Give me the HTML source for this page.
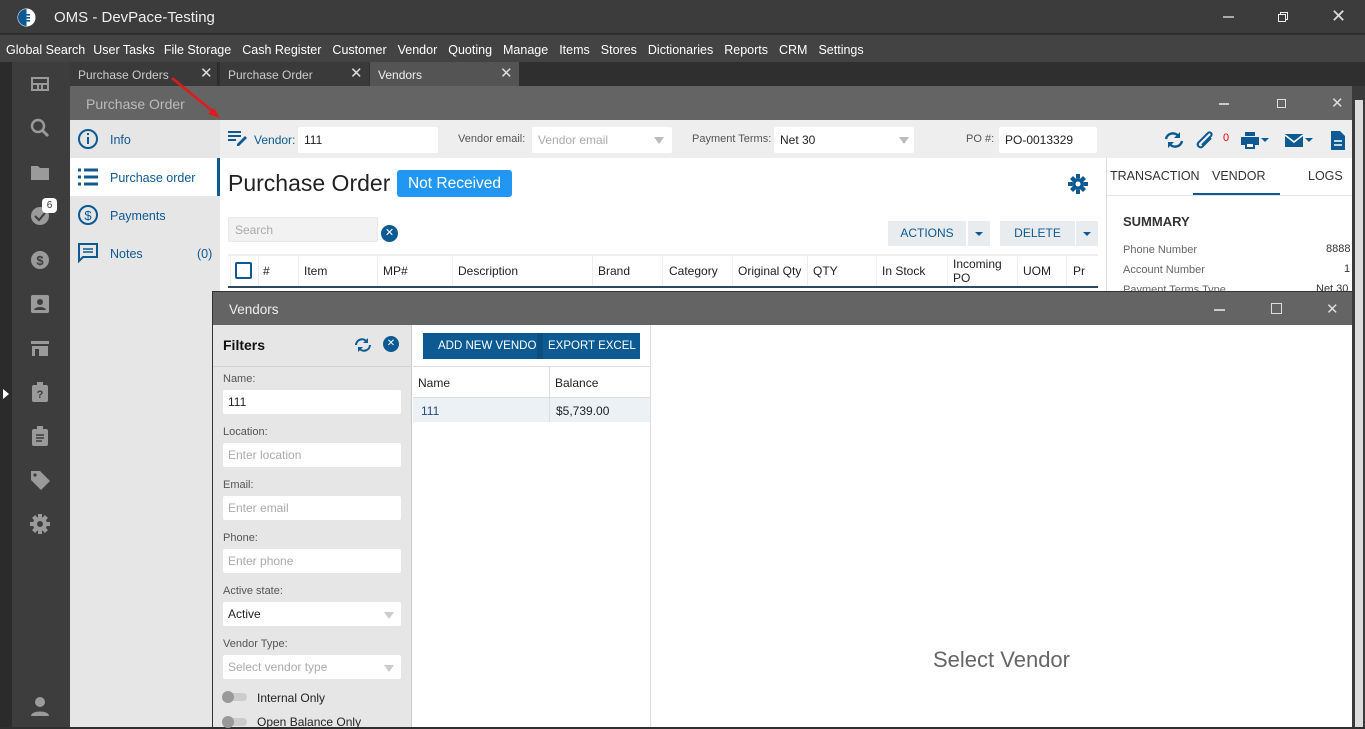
<!DOCTYPE html>
<html><head><meta charset="utf-8"><style>
*{box-sizing:border-box;margin:0;padding:0}
body{width:1365px;height:727px;overflow:hidden;background:#2f2f2f;font-family:"Liberation Sans",sans-serif;font-size:12px;position:relative;color:#222}
.a{position:absolute}
.inp{position:absolute;background:#fff;border-radius:2px;height:26px;padding:6px 6px;font-size:12px;color:#222}
.ph{color:#aaa}
.lbl{position:absolute;font-size:11px;color:#555}
.tri{position:absolute;width:0;height:0;border-left:5px solid transparent;border-right:5px solid transparent;border-top:7px solid #bbb}
.blue{color:#0c5a91}
</style></head><body>
<div class="a" style="left:0;top:0;width:1365px;height:34px;background:#3c3c3c;border-bottom:1px solid #2a2a2a"></div>
<svg class="a" style="left:17px;top:8px" width="19" height="19" viewBox="0 0 19 19"><circle cx="9.5" cy="9.5" r="9" fill="#fff"/><path d="M9.5 1a8.5 8.5 0 0 0 0 17z" fill="#0c5a91"/><rect x="7" y="6" width="6" height="1.6" fill="#0c5a91"/><rect x="7" y="9" width="6" height="1.6" fill="#0c5a91"/><rect x="7" y="12" width="6" height="1.6" fill="#0c5a91"/></svg>
<div class="a" style="left:54px;top:9px;font-size:15px;color:#eee">OMS - DevPace-Testing</div>
<div class="a" style="left:1223px;top:16px;width:11px;height:1.5px;background:#aaa"></div>
<div class="a" style="left:1280px;top:12px;width:8px;height:8px;border:1.5px solid #eee"></div>
<div class="a" style="left:1278px;top:14px;width:8px;height:8px;border:1.5px solid #eee;background:#3c3c3c"></div>
<div class="a" style="left:1331px;top:6px;font-size:18px;color:#ddd">✕</div>
<div class="a" style="left:0;top:35px;width:1365px;height:27px;background:#434343"></div>
<div class="a" style="left:6px;top:43px;font-size:12.5px;color:#fff;white-space:nowrap">
<span style="margin-right:8px">Global Search</span><span style="margin-right:9px">User Tasks</span><span style="margin-right:11px">File Storage</span><span style="margin-right:11px">Cash Register</span><span style="margin-right:11px">Customer</span><span style="margin-right:11px">Vendor</span><span style="margin-right:11px">Quoting</span><span style="margin-right:11px">Manage</span><span style="margin-right:11px">Items</span><span style="margin-right:11px">Stores</span><span style="margin-right:11px">Dictionaries</span><span style="margin-right:11px">Reports</span><span style="margin-right:11px">CRM</span><span>Settings</span></div>
<div class="a" style="left:0;top:62px;width:12px;height:665px;background:#2b2b2b"></div>
<div class="a" style="left:3px;top:389px;width:0;height:0;border-top:5px solid transparent;border-bottom:5px solid transparent;border-left:6px solid #fff"></div>
<div class="a" style="left:12px;top:62px;width:58px;height:665px;background:#3d3d3d"></div>
<svg class="a" style="left:29px;top:73px" width="24" height="480" fill="#9a9a9a">
<path d="M2 4h18v14H2z M4 6v4h14V6z M4 12v4h4v-4z M10 12v4h2v-4z M14 12v4h4v-4z" fill-rule="evenodd"/>
<g transform="translate(0,44)"><circle cx="9" cy="9" r="6" fill="none" stroke="#9a9a9a" stroke-width="2.5"/><path d="M13 13l6 6" stroke="#9a9a9a" stroke-width="3"/></g>
<g transform="translate(0,88)"><path d="M2 5h7l2 2h9v12H2z"/></g>
<g transform="translate(0,132)"><circle cx="11" cy="11" r="9"/><path d="M6 11l4 4 6-7" stroke="#3d3d3d" stroke-width="2" fill="none"/></g>
<g transform="translate(0,176)"><circle cx="11" cy="11" r="9"/><text x="11" y="16" font-size="13" font-weight="bold" fill="#3d3d3d" text-anchor="middle" font-family="Liberation Sans">$</text></g>
<g transform="translate(0,220)"><rect x="2" y="2" width="18" height="18" rx="2"/><circle cx="11" cy="9" r="3" fill="#3d3d3d"/><path d="M5 17c1-4 11-4 12 0z" fill="#3d3d3d"/></g>
<g transform="translate(0,264)"><path d="M2 4h18v3H2z M3 9h16v10H3z M6 12v7h4v-7z"/></g>
<g transform="translate(0,308)"><rect x="3" y="4" width="16" height="17" rx="2"/><rect x="8" y="1" width="6" height="4"/><text x="11" y="17" font-size="11" font-weight="bold" fill="#3d3d3d" text-anchor="middle" font-family="Liberation Sans">?</text></g>
<g transform="translate(0,352)"><rect x="3" y="4" width="16" height="17" rx="2"/><rect x="8" y="1" width="6" height="4"/><path d="M7 10h8M7 13h8M7 16h6" stroke="#3d3d3d" stroke-width="1.5"/></g>
<g transform="translate(0,396)"><path d="M2 2h9l10 10-9 9L2 11z"/><circle cx="6" cy="6" r="1.6" fill="#3d3d3d"/></g>
<g transform="translate(0,440)"><circle cx="11" cy="11" r="7"/><path d="M9 1h4v4h-4zM9 17h4v4h-4zM1 9h4v4H1zM17 9h4v4h-4zM3 5l3-3 3 3-3 3zM13 5l3-3 3 3-3 3zM3 17l3-3 3 3-3 3zM13 17l3-3 3 3-3 3z"/><circle cx="11" cy="11" r="3" fill="#3d3d3d"/></g>
</svg>
<div class="a" style="left:42px;top:198px;width:15px;height:15px;border-radius:4px;background:#fff;font-size:10px;text-align:center;line-height:15px;color:#333">6</div>
<svg class="a" style="left:29px;top:695px" width="22" height="22" fill="#9a9a9a"><circle cx="11" cy="7" r="5"/><path d="M2 21c0-6 18-6 18 0z"/></svg>
<div class="a" style="left:70px;top:62px;width:148px;height:24px;background:#3a3a3a;border-right:1px solid #2a2a2a"></div>
<div class="a" style="left:78px;top:68px;color:#ccc;font-size:12px">Purchase Orders</div><div class="a" style="left:200px;top:64px;color:#ddd;font-size:15px">✕</div>
<div class="a" style="left:220px;top:62px;width:149px;height:24px;background:#3a3a3a"></div>
<div class="a" style="left:228px;top:68px;color:#ccc;font-size:12px">Purchase Order</div><div class="a" style="left:350px;top:64px;color:#ddd;font-size:15px">✕</div>
<div class="a" style="left:370px;top:62px;width:149px;height:24px;background:#545454"></div>
<div class="a" style="left:378px;top:68px;color:#eee;font-size:12px">Vendors</div><div class="a" style="left:500px;top:64px;color:#ddd;font-size:15px">✕</div>
<div class="a" style="left:70px;top:86px;width:1282px;height:34px;background:#646464"></div>
<div class="a" style="left:86px;top:96px;color:#bbb;font-size:14px">Purchase Order</div>
<div class="a" style="left:1219px;top:103px;width:10px;height:1.5px;background:#ccc"></div>
<div class="a" style="left:1277px;top:99px;width:9px;height:9px;border:1.5px solid #ddd"></div>
<div class="a" style="left:1331px;top:94px;font-size:15px;color:#ddd">✕</div>
<svg class="a" style="left:170px;top:76px" width="52" height="44"><path d="M2 2L46 38" stroke="#e01b1b" stroke-width="2.5"/><path d="M50 42l-12-4 6-6z" fill="#e01b1b"/></svg>
<div class="a" style="left:1352px;top:86px;width:13px;height:641px;background:#3a3a3a"></div>
<div class="a" style="left:1355px;top:100px;width:8px;height:627px;background:#ddd"></div>
<div class="a" style="left:70px;top:120px;width:150px;height:607px;background:#e6e6e6"></div>
<div class="a" style="left:70px;top:158px;width:150px;height:38px;background:#fff;border-right:3px solid #0c5a91"></div>
<svg class="a" style="left:77px;top:127px" width="24" height="140" fill="none" stroke="#0c5a91" stroke-width="2">
<circle cx="11" cy="12" r="9"/><path d="M11 10v7M11 6v2"/>
<g transform="translate(0,38)" stroke-width="3"><path d="M1 5h3M7 5h14M1 12h3M7 12h14M1 19h3M7 19h14"/></g>
<g transform="translate(0,76)"><circle cx="11" cy="12" r="9"/><text x="11" y="17" font-size="13" fill="#0c5a91" stroke="none" text-anchor="middle" font-family="Liberation Sans">$</text></g>
<g transform="translate(0,114)"><path d="M2 3h18v13H6l-4 4z"/><path d="M6 8h10M6 11h10" stroke-width="1.5"/></g>
</svg>
<div class="a blue" style="left:110px;top:133px;font-size:12.5px">Info</div>
<div class="a blue" style="left:110px;top:171px;font-size:12.5px">Purchase order</div>
<div class="a blue" style="left:110px;top:209px;font-size:12.5px">Payments</div>
<div class="a blue" style="left:110px;top:247px;font-size:12.5px">Notes</div>
<div class="a blue" style="left:197px;top:247px;font-size:12.5px">(0)</div>
<div class="a" style="left:220px;top:120px;width:1132px;height:38px;background:#eee"></div>
<svg class="a" style="left:228px;top:130px" width="20" height="17" fill="#0c5a91"><rect x="0" y="1" width="13" height="2"/><rect x="0" y="5" width="13" height="2"/><rect x="0" y="9" width="8" height="2"/><path d="M9 14l8-8 2 2-8 8H9z"/></svg>
<div class="a blue" style="left:254px;top:133px;font-size:12px">Vendor:</div>
<div class="inp" style="left:298px;top:127px;width:140px">111</div>
<div class="a" style="left:458px;top:133px;font-size:11px;color:#555">Vendor email:</div>
<div class="inp ph" style="left:532px;top:127px;width:140px">Vendor email</div><div class="tri" style="left:654px;top:137px"></div>
<div class="a" style="left:692px;top:133px;font-size:11px;color:#555">Payment Terms:</div>
<div class="inp" style="left:774px;top:127px;width:140px">Net 30</div><div class="tri" style="left:899px;top:137px"></div>
<div class="a" style="left:966px;top:133px;font-size:11px;color:#555">PO #:</div>
<div class="inp" style="left:999px;top:127px;width:98px">PO-0013329</div>
<div class="a" style="left:220px;top:158px;width:886px;height:134px;background:#fff"></div>
<div class="a" style="left:228px;top:170px;font-size:23px;color:#222">Purchase Order</div>
<div class="a" style="left:397px;top:170px;width:115px;height:27px;background:#2196f3;border-radius:3px;color:#fff;font-size:15.5px;text-align:center;line-height:27px">Not Received</div>
<svg class="a" style="left:1068px;top:174px" width="20" height="20" fill="#0c5a91"><circle cx="10" cy="10" r="6"/><path d="M8 0h4v4H8zM8 16h4v4H8zM0 8h4v4H0zM16 8h4v4h-4zM2 5l3-3 3 3-3 3zM12 5l3-3 3 3-3 3zM2 15l3-3 3 3-3 3zM12 15l3-3 3 3-3 3z"/><circle cx="10" cy="10" r="2.5" fill="#fff"/></svg>
<div class="a" style="left:228px;top:217px;width:150px;height:25px;background:#f2f2f2;border:1px solid #e8e8e8;border-radius:2px;color:#aaa;padding:5px 6px">Search</div>
<div class="a" style="left:381px;top:225px;width:17px;height:17px;border-radius:50%;background:#0c5a91;color:#fff;font-size:11px;text-align:center;line-height:17px">✕</div>
<div class="a blue" style="left:888px;top:221px;width:78px;height:25px;background:#e8ecef;text-align:center;line-height:25px">ACTIONS</div>
<div class="a" style="left:968px;top:221px;width:22px;height:25px;background:#e8ecef"></div><div class="a" style="left:975px;top:232px;border-left:4px solid transparent;border-right:4px solid transparent;border-top:4px solid #0c5a91"></div>
<div class="a blue" style="left:1000px;top:221px;width:75px;height:25px;background:#e8ecef;text-align:center;line-height:25px">DELETE</div>
<div class="a" style="left:1076px;top:221px;width:22px;height:25px;background:#e8ecef"></div><div class="a" style="left:1083px;top:232px;border-left:4px solid transparent;border-right:4px solid transparent;border-top:4px solid #0c5a91"></div>
<div class="a" style="left:228px;top:254px;width:870px;height:38px;border-top:2px solid #eee"></div>
<div class="a" style="left:228px;top:286px;width:870px;height:2px;background:#2d4a63"></div>
<div class="a" style="left:235px;top:262px;width:17px;height:17px;border:2px solid #0c5a91;border-radius:2px"></div>
<div class="a" style="top:256px;left:228px;height:36px;width:870px;font-size:12px">
<span class="a" style="left:35px;top:8px">#</span><span class="a" style="left:76px;top:8px">Item</span><span class="a" style="left:155px;top:8px">MP#</span><span class="a" style="left:230px;top:8px">Description</span><span class="a" style="left:370px;top:8px">Brand</span><span class="a" style="left:441px;top:8px">Category</span><span class="a" style="left:510px;top:8px">Original Qty</span><span class="a" style="left:585px;top:8px">QTY</span><span class="a" style="left:654px;top:8px">In Stock</span><span class="a" style="left:725px;top:1px;line-height:14px">Incoming<br>PO</span><span class="a" style="left:795px;top:8px">UOM</span><span class="a" style="left:845px;top:8px">Pr</span>
<i class="a" style="left:2px;top:0;width:1px;height:30px;background:#eee"></i><i class="a" style="left:30px;top:0;width:1px;height:30px;background:#eee"></i><i class="a" style="left:70px;top:0;width:1px;height:30px;background:#eee"></i><i class="a" style="left:149px;top:0;width:1px;height:30px;background:#eee"></i><i class="a" style="left:224px;top:0;width:1px;height:30px;background:#eee"></i><i class="a" style="left:364px;top:0;width:1px;height:30px;background:#eee"></i><i class="a" style="left:434px;top:0;width:1px;height:30px;background:#eee"></i><i class="a" style="left:504px;top:0;width:1px;height:30px;background:#eee"></i><i class="a" style="left:579px;top:0;width:1px;height:30px;background:#eee"></i><i class="a" style="left:648px;top:0;width:1px;height:30px;background:#eee"></i><i class="a" style="left:719px;top:0;width:1px;height:30px;background:#eee"></i><i class="a" style="left:789px;top:0;width:1px;height:30px;background:#eee"></i><i class="a" style="left:838px;top:0;width:1px;height:30px;background:#eee"></i>
</div>
<svg class="a" style="left:1163px;top:130px" width="185" height="20">
<g fill="none" stroke="#0c5a91" stroke-width="2.5"><path d="M3 9a7 7 0 0 1 13-2M19 11a7 7 0 0 1-13 2"/></g><path d="M17 2v6h-6zM5 18v-6h6z" fill="#0c5a91"/>
<path d="M48 8l-9 9a3 3 0 0 1-4-4l10-10a2 2 0 0 1 3 3l-9 9" fill="none" stroke="#0c5a91" stroke-width="2"/>
<text x="60" y="11" font-size="11" fill="#e00" font-family="Liberation Sans">0</text>
<path d="M82 2h10v4H82zM78 7h18v8H78zM82 12h10v7H82z" fill="#0c5a91"/><path d="M84 14h6v3h-6z" fill="#fff"/><path d="M98 8h8l-4 4z" fill="#0c5a91"/>
<rect x="122" y="4" width="18" height="13" fill="#0c5a91"/><path d="M122 5l9 7 9-7" fill="none" stroke="#fff" stroke-width="1.5"/><path d="M142 8h8l-4 4z" fill="#0c5a91"/>
<path d="M168 1h9l5 5v14h-14z" fill="#0c5a91"/><path d="M171 11h8M171 15h8" stroke="#fff" stroke-width="1.6"/>
</svg>
<div class="a" style="left:1106px;top:158px;width:246px;height:134px;background:#fff;border-left:1px solid #ddd"></div>
<div class="a" style="left:1110px;top:169px;font-size:12.5px;color:#333">TRANSACTION</div>
<div class="a" style="left:1212px;top:169px;font-size:12.5px;color:#333">VENDOR</div>
<div class="a" style="left:1308px;top:169px;font-size:12.5px;color:#333">LOGS</div>
<div class="a" style="left:1193px;top:193px;width:87px;height:2px;background:#0c5a91"></div>
<div class="a" style="left:1107px;top:195px;width:245px;height:1px;background:#e5e5e5"></div>
<div class="a" style="left:1123px;top:214px;font-size:13px;font-weight:bold;color:#333">SUMMARY</div>
<div class="a" style="left:1123px;top:244px;font-size:11px;color:#666">Phone Number</div><div class="a" style="left:1326px;top:243px;font-size:11px;color:#333">8888</div>
<div class="a" style="left:1123px;top:264px;font-size:11px;color:#666">Account Number</div><div class="a" style="left:1344px;top:263px;font-size:11px;color:#333">1</div>
<div class="a" style="left:1123px;top:284px;font-size:11px;color:#666">Payment Terms Type</div><div class="a" style="left:1316px;top:283px;font-size:11px;color:#333">Net 30</div>
<div class="a" style="left:212px;top:291px;width:1140px;height:436px;background:#fff;border-left:1px solid #333;border-top:1px solid #333"></div>
<div class="a" style="left:213px;top:292px;width:1139px;height:33px;background:#646464"></div>
<div class="a" style="left:229px;top:302px;color:#eee;font-size:13.5px">Vendors</div>
<div class="a" style="left:1214px;top:309px;width:11px;height:1.5px;background:#ccc"></div>
<div class="a" style="left:1271px;top:303px;width:11px;height:11px;border:1.5px solid #ddd"></div>
<div class="a" style="left:1326px;top:300px;font-size:15px;color:#ddd">✕</div>
<div class="a" style="left:213px;top:325px;width:199px;height:402px;background:#e6e6e6;border-right:1px solid #ccc"></div>
<div class="a" style="left:223px;top:337px;font-size:14px;font-weight:bold;color:#111">Filters</div>
<svg class="a" style="left:354px;top:337px" width="18" height="16"><g fill="none" stroke="#0c5a91" stroke-width="2"><path d="M2 8a6 6 0 0 1 11-3M16 8a6 6 0 0 1-11 3"/></g><path d="M14 1v5h-5zM4 15v-5h5z" fill="#0c5a91"/></svg>
<div class="a" style="left:383px;top:336px;width:16px;height:16px;border-radius:50%;background:#0c5a91;color:#fff;font-size:10px;text-align:center;line-height:16px">✕</div>
<div class="a" style="left:213px;top:366px;width:199px;height:1px;background:#d2d2d2"></div>
<div class="lbl" style="left:223px;top:373px">Name:</div>
<div class="inp" style="left:223px;top:390px;width:178px;height:24px;padding:5px">111</div>
<div class="lbl" style="left:223px;top:426px">Location:</div>
<div class="inp ph" style="left:223px;top:443px;width:178px;height:24px;padding:5px">Enter location</div>
<div class="lbl" style="left:223px;top:479px">Email:</div>
<div class="inp ph" style="left:223px;top:496px;width:178px;height:24px;padding:5px">Enter email</div>
<div class="lbl" style="left:223px;top:532px">Phone:</div>
<div class="inp ph" style="left:223px;top:549px;width:178px;height:24px;padding:5px">Enter phone</div>
<div class="lbl" style="left:223px;top:585px">Active state:</div>
<div class="inp" style="left:223px;top:602px;width:178px;height:24px;padding:5px">Active</div><div class="tri" style="left:384px;top:612px;border-top-color:#ccc"></div>
<div class="lbl" style="left:223px;top:638px">Vendor Type:</div>
<div class="inp ph" style="left:223px;top:655px;width:178px;height:24px;padding:5px">Select vendor type</div><div class="tri" style="left:384px;top:665px;border-top-color:#ccc"></div>
<div class="a" style="left:223px;top:693px;width:24px;height:8px;border-radius:4px;background:#ccc"></div><div class="a" style="left:222px;top:691px;width:12px;height:12px;border-radius:50%;background:#999"></div>
<div class="a" style="left:257px;top:691px;font-size:12px">Internal Only</div>
<div class="a" style="left:223px;top:718px;width:24px;height:8px;border-radius:4px;background:#ccc"></div><div class="a" style="left:222px;top:716px;width:12px;height:12px;border-radius:50%;background:#999"></div>
<div class="a" style="left:257px;top:715px;font-size:12px">Open Balance Only</div>
<div class="a" style="left:423px;top:333px;width:217px;height:26px;background:#0c5a91"></div>
<div class="a" style="left:537px;top:333px;width:6px;height:26px;background:#0a4f80"></div>
<div class="a" style="left:438px;top:340px;color:#fff;font-size:11.5px">ADD NEW VENDO</div>
<div class="a" style="left:548px;top:340px;color:#fff;font-size:11.5px">EXPORT EXCEL</div>
<div class="a" style="left:413px;top:366px;width:238px;height:1px;background:#ddd"></div>
<div class="a" style="left:650px;top:325px;width:1px;height:402px;background:#ddd"></div>
<div class="a" style="left:549px;top:367px;width:1px;height:55px;background:#ddd"></div>
<div class="a" style="left:418px;top:376px;font-size:12px">Name</div>
<div class="a" style="left:555px;top:376px;font-size:12px">Balance</div>
<div class="a" style="left:413px;top:397px;width:237px;height:25px;background:#ebf1f5;border-top:1px solid #ddd"></div>
<div class="a" style="left:549px;top:397px;width:1px;height:25px;background:#ddd"></div>
<div class="a" style="left:421px;top:404px;font-size:12px;color:#2a4a7a">111</div>
<div class="a" style="left:556px;top:404px;font-size:12px">$5,739.00</div>
<div class="a" style="left:933px;top:647px;font-size:22px;color:#666">Select Vendor</div>
</body></html>
